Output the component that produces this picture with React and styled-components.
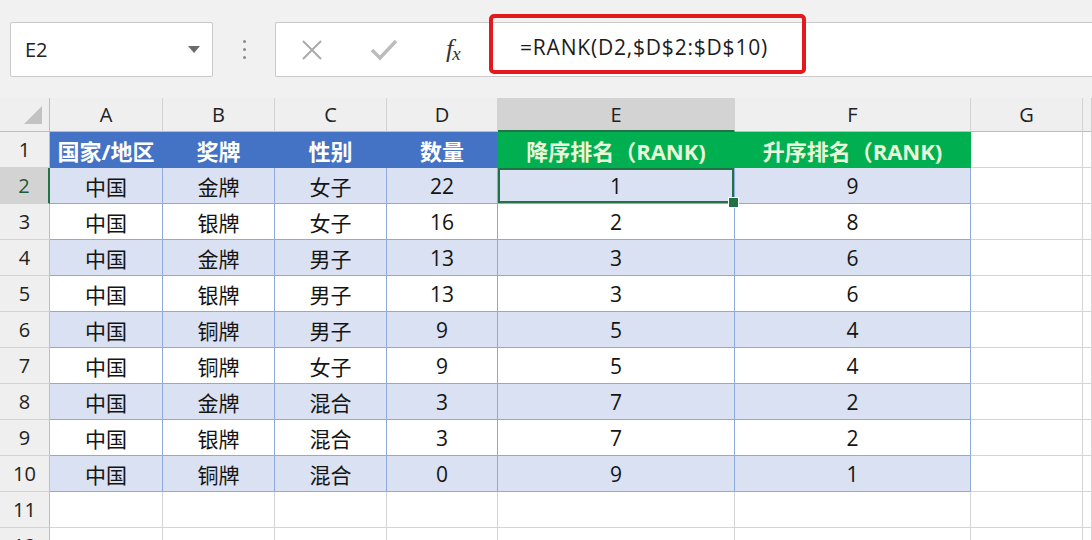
import React from "react";
import styled, { createGlobalStyle, css } from "styled-components";

const GlobalStyle = createGlobalStyle`
  html, body {
    margin: 0;
    padding: 0;
    background: #ffffff;
    overflow: hidden;
  }
  * { box-sizing: border-box; }
`;

const COLS = ["A", "B", "C", "D", "E", "F", "G", ""];
const HEADERS = ["国家/地区", "奖牌", "性别", "数量", "降序排名（RANK)", "升序排名（RANK)"];
const DATA = [
  ["中国", "金牌", "女子", 22, 1, 9],
  ["中国", "银牌", "女子", 16, 2, 8],
  ["中国", "金牌", "男子", 13, 3, 6],
  ["中国", "银牌", "男子", 13, 3, 6],
  ["中国", "铜牌", "男子", 9, 5, 4],
  ["中国", "铜牌", "女子", 9, 5, 4],
  ["中国", "金牌", "混合", 3, 7, 2],
  ["中国", "银牌", "混合", 3, 7, 2],
  ["中国", "铜牌", "混合", 0, 9, 1],
];

const font = `"Open Sans", "Noto Sans CJK SC", sans-serif`;

const Page = styled.div`
  width: 1092px;
  height: 540px;
  overflow: hidden;
  display: flex;
  flex-direction: column;
  font-family: ${font};
  color: #1a1a1a;
`;

const Toolbar = styled.div`
  height: 98px;
  flex: none;
  background: #f1f1f1;
  display: flex;
  align-items: flex-start;
  padding: 22px 0 0 10px;
`;

const NameBox = styled.div`
  width: 203px;
  height: 55px;
  background: #fff;
  border: 1px solid #c9c9c9;
  border-radius: 2px;
  display: flex;
  align-items: center;
  justify-content: space-between;
  padding: 0 12px 0 14px;
  font-size: 20px;
  color: #222;
`;

const Caret = styled.span`
  width: 0;
  height: 0;
  border-left: 6px solid transparent;
  border-right: 6px solid transparent;
  border-top: 7px solid #6a6a6a;
`;

const Dots = styled.div`
  width: 62px;
  height: 55px;
  display: flex;
  flex-direction: column;
  align-items: center;
  justify-content: center;
  gap: 5px;
  span {
    width: 3px;
    height: 3px;
    border-radius: 50%;
    background: #8a8a8a;
  }
`;

const FxBox = styled.div`
  width: 215px;
  height: 55px;
  background: #fff;
  border: 1px solid #c9c9c9;
  border-right: none;
  border-radius: 2px 0 0 2px;
  display: flex;
  align-items: center;
  padding-left: 24px;
  gap: 46px;
`;

const FxLabel = styled.span`
  font-family: "Liberation Serif", serif;
  font-style: italic;
  font-size: 26px;
  color: #333;
  margin-left: 2px;
  letter-spacing: -1px;
  sub {
    font-size: 19px;
    vertical-align: -3px;
  }
`;

const FormulaBar = styled.div`
  flex: 1;
  height: 55px;
  background: #fff;
  border-top: 1px solid #c9c9c9;
  border-bottom: 1px solid #c9c9c9;
  position: relative;
  display: flex;
  align-items: center;
  padding: 0 0 6px 30px;
  font-size: 21px;
  letter-spacing: 0.8px;
  color: #1c1c1c;
`;

const Highlight = styled.div`
  position: absolute;
  left: -1px;
  top: -9px;
  width: 317px;
  height: 60px;
  border: 4px solid #e3191b;
  border-radius: 5px;
  pointer-events: none;
`;

const Sheet = styled.div`
  flex: 1;
  display: grid;
  grid-template-columns: 50px 113px 112px 112px 111px 237px 236px 112px 1fr;
  grid-template-rows: 34px repeat(12, 36px);
  background: #fff;
`;

const ColHead = styled.div`
  background: ${(p) => (p.$active ? "#d3d3d3" : "#efefef")};
  border-right: 1px solid #d2d2d2;
  border-bottom: ${(p) => (p.$active ? "2px solid #217346" : "1px solid #bdbdbd")};
  display: flex;
  align-items: center;
  justify-content: center;
  font-size: 20px;
  color: #222;
`;

const Corner = styled.div`
  background: #efefef;
  border-right: 1px solid #bdbdbd;
  border-bottom: 1px solid #bdbdbd;
  display: flex;
  align-items: flex-end;
  justify-content: flex-end;
  padding: 0 7px 7px 0;
`;

const RowHead = styled.div`
  background: ${(p) => (p.$active ? "#d3d3d3" : "#efefef")};
  border-right: ${(p) => (p.$active ? "2px solid #217346" : "1px solid #bdbdbd")};
  border-bottom: 1px solid #d2d2d2;
  display: flex;
  align-items: center;
  justify-content: center;
  font-size: 20px;
  color: ${(p) => (p.$active ? "#1f5a3a" : "#222")};
`;

const tones = {
  blue: css`
    background: #4472c4;
    color: #ffffff;
    font-weight: 700;
    font-size: 22px;
    border-color: #4472c4;
  `,
  green: css`
    background: #00b050;
    color: #e9f6da;
    font-weight: 700;
    font-size: 22px;
    border-color: #00b050;
  `,
  band: css`
    background: #d9e1f2;
    border-color: #8ea9db;
  `,
  plain: css`
    background: #ffffff;
    border-color: #8ea9db;
  `,
  empty: css`
    background: #ffffff;
    border-color: #d4d4d4;
  `,
};

const Cell = styled.div`
  position: relative;
  border-right: 1px solid;
  border-bottom: 1px solid;
  display: flex;
  align-items: center;
  justify-content: center;
  font-size: 21px;
  color: #141414;
  white-space: nowrap;
  ${(p) => tones[p.$tone]}
  ${(p) =>
    p.$selected &&
    css`
      box-shadow: inset 0 0 0 2px #217346;
      &::after {
        content: "";
        position: absolute;
        right: -5px;
        bottom: -5px;
        width: 9px;
        height: 9px;
        background: #217346;
        border: 1px solid #fff;
        z-index: 2;
      }
    `}
`;

const CloseIcon = () => (
  <svg width="24" height="24" viewBox="0 0 24 24">
    <path d="M3 3 L21 21 M21 3 L3 21" stroke="#a9a9a9" strokeWidth="2" fill="none" />
  </svg>
);

const CheckIcon = () => (
  <svg width="28" height="24" viewBox="0 0 28 24">
    <path d="M2 12 L10 20 L26 3" stroke="#bcbcbc" strokeWidth="3.5" fill="none" />
  </svg>
);

const CornerMark = () => (
  <svg width="18" height="18" viewBox="0 0 18 18">
    <path d="M18 0 L18 18 L0 18 Z" fill="#c2c2c2" />
  </svg>
);

export default function App() {
  const rows = [HEADERS, ...DATA];
  return (
    <Page>
      <GlobalStyle />
      <Toolbar>
        <NameBox>
          E2
          <Caret />
        </NameBox>
        <Dots>
          <span />
          <span />
          <span />
        </Dots>
        <FxBox>
          <CloseIcon />
          <CheckIcon />
          <FxLabel>
            f<sub>x</sub>
          </FxLabel>
        </FxBox>
        <FormulaBar>
          =RANK(D2,$D$2:$D$10)
          <Highlight />
        </FormulaBar>
      </Toolbar>

      <Sheet>
        <Corner>
          <CornerMark />
        </Corner>
        {COLS.map((c, i) => (
          <ColHead key={i} $active={c === "E"}>
            {c}
          </ColHead>
        ))}

        {Array.from({ length: 12 }).map((_, r) => (
          <React.Fragment key={r}>
            <RowHead $active={r === 1}>{r + 1}</RowHead>
            {COLS.map((_, c) => {
              const inTable = r < rows.length && c < 6;
              let tone = "empty";
              if (inTable) {
                if (r === 0) tone = c < 4 ? "blue" : "green";
                else tone = r % 2 === 1 ? "band" : "plain";
              }
              return (
                <Cell key={c} $tone={tone} $selected={r === 1 && c === 4}>
                  {inTable ? rows[r][c] : ""}
                </Cell>
              );
            })}
          </React.Fragment>
        ))}
      </Sheet>
    </Page>
  );
}
